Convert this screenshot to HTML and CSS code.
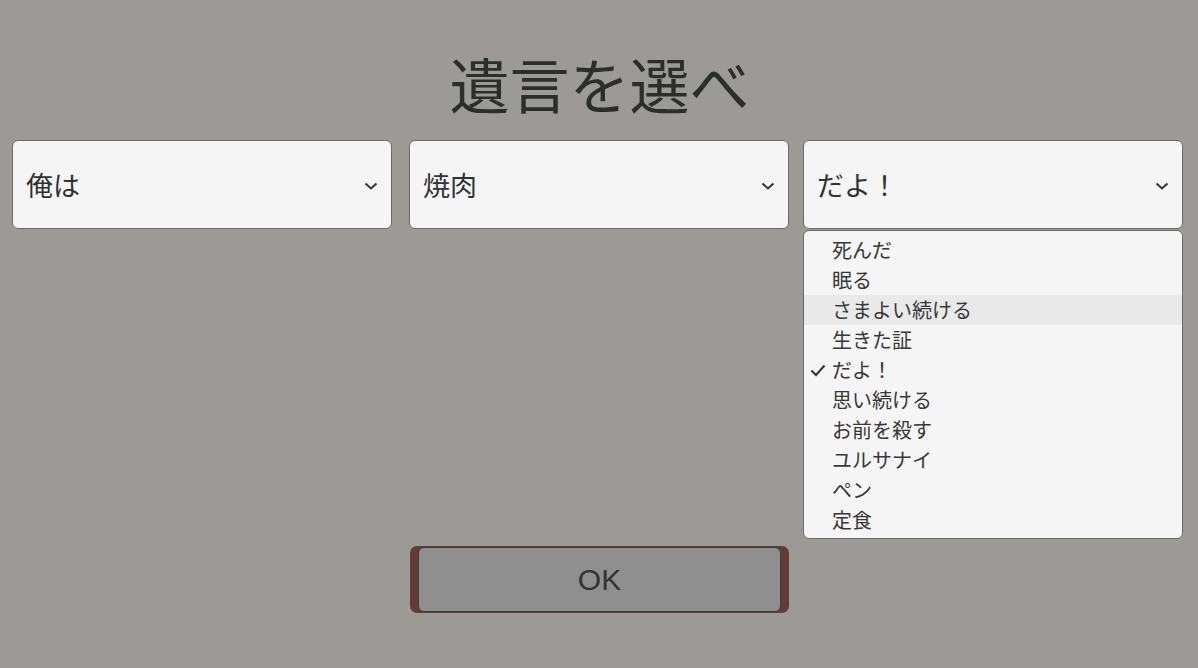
FILE: index.html
```html
<!DOCTYPE html>
<html lang="ja">
<head>
<meta charset="utf-8">
<link rel="stylesheet" href="styles.css">
</head>
<body>
<div class="page">
  <h1 class="title">遺言を選べ</h1>
  <div class="row">
    <div class="dd dd1">
      <span class="dd-label">俺は</span>
      <svg class="chev" width="14" height="8" viewBox="0 0 14 8"><polyline points="1.5,1.5 7,6.5 12.5,1.5" fill="none" stroke="#333" stroke-width="2"/></svg>
    </div>
    <div class="dd dd2">
      <span class="dd-label">焼肉</span>
      <svg class="chev" width="14" height="8" viewBox="0 0 14 8"><polyline points="1.5,1.5 7,6.5 12.5,1.5" fill="none" stroke="#333" stroke-width="2"/></svg>
    </div>
    <div class="dd-wrap">
      <div class="dd dd3">
        <span class="dd-label">だよ！</span>
        <svg class="chev" width="14" height="8" viewBox="0 0 14 8"><polyline points="1.5,1.5 7,6.5 12.5,1.5" fill="none" stroke="#333" stroke-width="2"/></svg>
      </div>
      <ul class="menu">
        <li class="item">死んだ</li>
        <li class="item">眠る</li>
        <li class="item hover">さまよい続ける</li>
        <li class="item">生きた証</li>
        <li class="item checked"><svg class="check" width="16" height="13" viewBox="0 0 16 13"><polyline points="1.5,6.5 6,11 14.5,1.5" fill="none" stroke="#333" stroke-width="2"/></svg>だよ！</li>
        <li class="item">思い続ける</li>
        <li class="item">お前を殺す</li>
        <li class="item">ユルサナイ</li>
        <li class="item">ペン</li>
        <li class="item">定食</li>
      </ul>
    </div>
  </div>
  <div class="btn-row">
    <div class="btn-frame">
      <button class="btn">OK</button>
    </div>
  </div>
</div>
</body>
</html>
```
FILE: styles.css
```css
html, body {
  margin: 0;
  padding: 0;
  background: #9b9a96;
  font-family: "Noto Sans CJK JP", "Noto Sans", sans-serif;
}
.page {
  width: 1198px;
  height: 668px;
  overflow: hidden;
}
.title {
  margin: 48px 0 0 0;
  height: 72px;
  line-height: 70px;
  font-size: 60px;
  font-weight: 400;
  color: #2b2e29;
  text-align: center;
  padding-left: 1px;
}
.row {
  display: flex;
  margin-top: 20px;
  padding-left: 12px;
}
.dd {
  box-sizing: border-box;
  width: 380px;
  height: 89px;
  background: #f5f5f5;
  border: 1px solid #6a6a68;
  border-radius: 6px;
  display: flex;
  align-items: center;
  justify-content: space-between;
  padding: 0 13px 0 13px;
}
.dd2 { margin-left: 17px; }
.dd-wrap {
  position: relative;
  margin-left: 14px;
}
.dd-label {
  font-size: 27px;
  color: #323232;
  line-height: 1;
}
.chev { display: block; margin-top: 2px; }
.menu {
  position: absolute;
  left: 0;
  top: 90px;
  box-sizing: border-box;
  width: 380px;
  height: 309px;
  margin: 0;
  padding: 4px 0 0 0;
  list-style: none;
  background: #f5f5f5;
  border: 1px solid #6a6a68;
  border-radius: 6px;
}
.item {
  height: 30px;
  line-height: 30px;
  font-size: 20px;
  color: #383838;
  padding-left: 28px;
  position: relative;
}
.item.hover { background: #e9e9e9; }
.check {
  position: absolute;
  left: 6px;
  top: 9px;
}
.btn-row {
  display: flex;
  justify-content: center;
  margin-top: 317px;
}
.btn-frame {
  box-sizing: border-box;
  width: 379px;
  height: 67px;
  margin-left: 1px;
  background: #643b36;
  border-radius: 7px;
  padding: 1px 8px 1px 8px;
  display: flex;
}
.btn {
  flex: 1;
  box-sizing: border-box;
  background: #8f8f8f;
  border: 1px solid #3e3a38;
  border-radius: 6px;
  font-family: "Liberation Sans", "Noto Sans", sans-serif;
  font-size: 30px;
  color: #333;
  padding: 0;
}
```
